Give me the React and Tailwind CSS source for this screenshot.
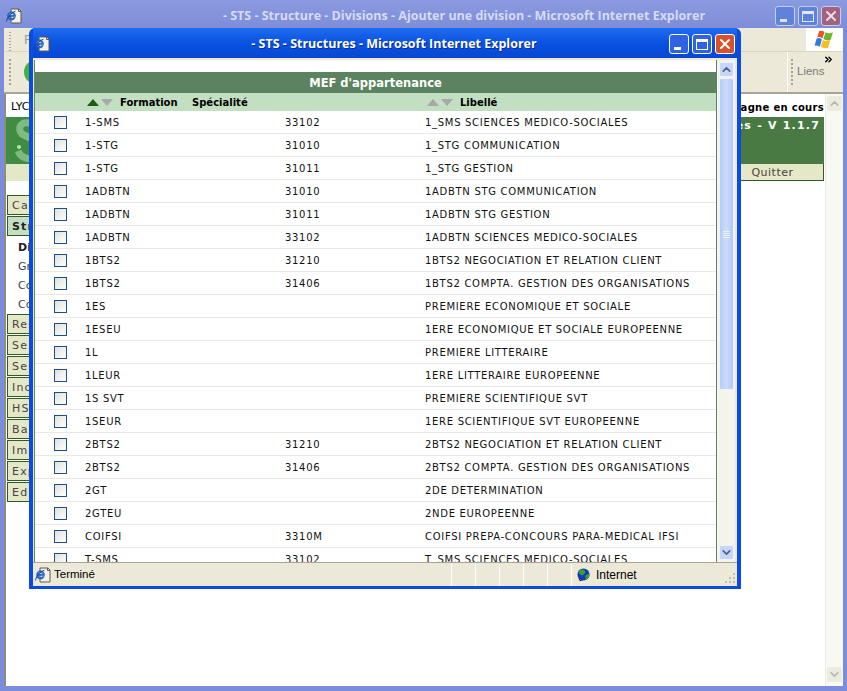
import { ChevronUp, ChevronDown, ChevronsRight, X } from 'lucide-react'

const lignes = [
  ['1-SMS', '33102', '1_SMS SCIENCES MEDICO-SOCIALES'],
  ['1-STG', '31010', '1_STG COMMUNICATION'],
  ['1-STG', '31011', '1_STG GESTION'],
  ['1ADBTN', '31010', '1ADBTN STG COMMUNICATION'],
  ['1ADBTN', '31011', '1ADBTN STG GESTION'],
  ['1ADBTN', '33102', '1ADBTN SCIENCES MEDICO-SOCIALES'],
  ['1BTS2', '31210', '1BTS2 NEGOCIATION ET RELATION CLIENT'],
  ['1BTS2', '31406', '1BTS2 COMPTA. GESTION DES ORGANISATIONS'],
  ['1ES', '', 'PREMIERE ECONOMIQUE ET SOCIALE'],
  ['1ESEU', '', '1ERE ECONOMIQUE ET SOCIALE EUROPEENNE'],
  ['1L', '', 'PREMIERE LITTERAIRE'],
  ['1LEUR', '', '1ERE LITTERAIRE EUROPEENNE'],
  ['1S SVT', '', 'PREMIERE SCIENTIFIQUE SVT'],
  ['1SEUR', '', '1ERE SCIENTIFIQUE SVT EUROPEENNE'],
  ['2BTS2', '31210', '2BTS2 NEGOCIATION ET RELATION CLIENT'],
  ['2BTS2', '31406', '2BTS2 COMPTA. GESTION DES ORGANISATIONS'],
  ['2GT', '', '2DE DETERMINATION'],
  ['2GTEU', '', '2NDE EUROPEENNE'],
  ['COIFSI', '3310M', 'COIFSI PREPA-CONCOURS PARA-MEDICAL IFSI'],
  ['T-SMS', '33102', 'T_SMS SCIENCES MEDICO-SOCIALES'],
]

const menuBas = ['Res', 'Ser', 'Ser', 'Inc', 'HSA', 'Bas', 'Imp', 'Exp', 'Edit']

function IconeIE({ className }) {
  return (
    <svg viewBox="0 0 16 16" className={className}>
      <path d="M5 1h8l2 2v12H5z" fill="#f4f2e8" stroke="#5c5c50" />
      <path d="M12.5 1v2.5H15" fill="#d8d6c8" stroke="#5c5c50" />
      <path d="M1.6 8.4a4 4 0 1 1 7.9 0H3.6a2 2 0 0 0 3.7 1.2h2a4 4 0 0 1-7.7-1.2z" fill="#2a70d8" stroke="#14459c" strokeWidth="0.5" />
      <path d="M3.7 6.8h3.8a2 2 0 0 0-3.8 0z" fill="#f4f2e8" />
      <path d="M0.7 13.4C0 11 5 4.500 9.400 3.300" fill="none" stroke="#123f96" strokeWidth="1" />
    </svg>
  )
}

function BoutonsFenetre({ pale = false }) {
  const bleu = pale
    ? 'bg-[#5f82dc] border-[#c4cff0] text-[#dfe6fa]'
    : 'bg-[#2f63e4] border-white text-white'
  const rouge = pale
    ? 'bg-[#a4627e] border-[#c4cff0] text-[#f0dfe4]'
    : 'bg-[#d8512c] border-white text-white'
  return (
    <div className="flex gap-[3px]">
      <div className={`w-[20px] h-[20px] rounded-[3px] border flex items-end pl-[4px] pb-[3px] ${bleu}`}>
        <div className="w-[7px] h-[3px] bg-current" />
      </div>
      <div className={`w-[20px] h-[20px] rounded-[3px] border flex items-center justify-center ${bleu}`}>
        <div className="w-[12px] h-[11px] border border-current border-t-[3px]" />
      </div>
      <div className={`w-[20px] h-[20px] rounded-[3px] border flex items-center justify-center ${rouge}`}>
        <X size={16} strokeWidth={3} />
      </div>
    </div>
  )
}

function Poignee({ className = '' }) {
  return (
    <div className={`flex flex-col gap-[2px] ${className}`}>
      {[0, 1, 2, 3, 4, 5, 6].map((i) => (
        <div key={i} className="w-[2px] h-[2px] bg-[#a8a596]" />
      ))}
    </div>
  )
}

function Fleches({ actif = false }) {
  return (
    <div className="flex gap-[2px]">
      <div className={`w-0 h-0 border-x-[6.5px] border-x-transparent border-b-[7px] ${actif ? 'border-b-[#1f5a14]' : 'border-b-[#a8a8a8]'}`} />
      <div className="w-0 h-0 border-x-[6.5px] border-x-transparent border-t-[7px] border-t-[#a8a8a8]" />
    </div>
  )
}

function BoutonMenu({ label, actif = false }) {
  return (
    <div className={`h-[20px] w-[40px] mb-px border border-[#2f5a22] pl-[4px] text-[11px] leading-[19px] tracking-[1.2px] overflow-hidden whitespace-nowrap ${actif ? 'bg-[#c3dfc1] font-bold text-[#222]' : 'bg-[#e4e8c6] text-[#444]'}`}>
      {label}
    </div>
  )
}

function BarreDefilement() {
  return (
    <div className="w-[18px] shrink-0 bg-[#f4f3ec] flex flex-col items-center pt-[2px] pb-[2px]">
      <div className="w-[15px] h-[15px] rounded-[2px] bg-[#c5d6fa] border border-[#eef3fe] flex items-center justify-center text-[#4d6185]">
        <ChevronUp size={13} strokeWidth={3} />
      </div>
      <div className="w-[15px] h-[312px] mt-px rounded-[2px] bg-gradient-to-r from-[#b6ccf8] via-[#cbdafc] to-[#b2c8f4] border border-[#eef3fe] flex flex-col items-center justify-center gap-px">
        <div className="w-[7px] h-px bg-[#eef3fe]" />
        <div className="w-[7px] h-px bg-[#eef3fe]" />
        <div className="w-[7px] h-px bg-[#eef3fe]" />
        <div className="w-[7px] h-px bg-[#eef3fe]" />
      </div>
      <div className="flex-1" />
      <div className="w-[15px] h-[15px] rounded-[2px] bg-[#c5d6fa] border border-[#eef3fe] flex items-center justify-center text-[#4d6185]">
        <ChevronDown size={13} strokeWidth={3} />
      </div>
    </div>
  )
}

function Popup() {
  return (
    <div className="absolute left-[29px] top-[28px] w-[712px] h-[561px] flex flex-col rounded-t-[6px] bg-[#0a4be0] px-[4px] pb-[3px]">
      {/* Barre de titre */}
      <div className="h-[30px] shrink-0 flex items-center pt-[2px] pr-[2px] bg-gradient-to-b from-[#1f6cf0] via-[#0a52e0] to-[#0847d4]">
        <IconeIE className="w-[16px] h-[16px] ml-[1px]" />
        <div className="flex-1 text-center text-white font-bold text-[12.5px] pl-[69px] [font-family:'Open_Sans',sans-serif] [text-shadow:1px_1px_#0a2a90]">
          - STS - Structures - Microsoft Internet Explorer
        </div>
        <BoutonsFenetre />
      </div>

      <div className="flex-1 min-h-0 flex bg-[#ece9d8] pt-[2px] pl-[1px] pr-[2px]">
        <div className="flex-1 min-w-0 flex flex-col bg-white border-l border-l-[#6f8a62] overflow-hidden border-r border-r-[#5c8360] [font-family:'DejaVu_Sans',sans-serif]">
          <div className="h-[12px] shrink-0 bg-white" />
          <div className="h-[21px] shrink-0 bg-[#5c8360] text-white text-center font-bold text-[11.5px] leading-[23px]">
            MEF d'appartenance
          </div>
          <div className="h-[18px] shrink-0 bg-[#c3dfc1] flex items-center text-[10px] font-bold text-black">
            <div className="w-[52px]" />
            <Fleches actif />
            <span className="ml-[7px] w-[72px]">Formation</span>
            <span className="w-[235px]">Spécialité</span>
            <Fleches />
            <span className="ml-[7px]">Libellé</span>
          </div>
          <div className="flex-1 min-h-0 overflow-hidden">
            {lignes.map(([formation, specialite, libelle], i) => (
              <div key={i} className="h-[23px] grid grid-cols-[50px_200px_140px_1fr] items-center border-b border-b-[#e8e8e8] text-[10px] tracking-[0.7px] text-[#111]">
                <div className="pl-[19px]">
                  <div className="w-[13px] h-[13px] border border-[#1c5180] bg-gradient-to-br from-[#e0e0da] to-white" />
                </div>
                <span>{formation}</span>
                <span>{specialite}</span>
                <span className="whitespace-nowrap">{libelle}</span>
              </div>
            ))}
          </div>
        </div>
        <BarreDefilement />
      </div>

      {/* Barre d'état */}
      <div className="h-[24px] shrink-0 bg-[#ece9d8] border-t border-t-[#a8a596] flex items-center text-[11.5px] text-black [font-family:'Liberation_Sans',sans-serif]">
        <IconeIE className="w-[16px] h-[16px] ml-[2px]" />
        <span className="ml-[3px] w-[397px]">Terminé</span>
        <div className="h-[22px] w-[24px] border-l border-l-white" />
        <div className="h-[22px] w-[24px] border-l border-l-white" />
        <div className="h-[22px] w-[24px] border-l border-l-white" />
        <div className="h-[22px] w-[24px] border-l border-l-white" />
        <div className="h-[22px] w-[24px] border-l border-l-white" />
        <div className="h-[22px] flex-1 border-l border-l-white flex items-center pl-[5px]">
          <svg viewBox="0 0 14 14" className="w-[13px] h-[13px]">
            <circle cx="7" cy="7" r="6.5" fill="#1638b8" />
            <path d="M3 1.500l5 .5 1 3-3 3-4-2zM9 8l4-2 0 4-4 3z" fill="#2fa82a" />
            <path d="M1 10l3 3 3 1-4 0z" fill="#101838" />
          </svg>
          <span className="ml-[6px] text-[12px]">Internet</span>
          <div className="flex-1" />
          <svg viewBox="0 0 11 11" className="w-[11px] h-[11px] mr-[1px] mt-[8px]">
            <path d="M8 0h2v2H8zM4 4h2v2H4zM8 4h2v2H8zM0 8h2v2H0zM4 8h2v2H4zM8 8h2v2H8z" fill="#c4c1ae" />
          </svg>
        </div>
      </div>
    </div>
  )
}

export default function App() {
  return (
    <div className="relative w-[847px] h-[691px] overflow-hidden flex flex-col bg-[#7c8cdc] [font-family:'DejaVu_Sans',sans-serif]">
      {/* Fenêtre derrière */}
      <div className="h-[28px] shrink-0 flex items-center pt-[4px] pr-[6px] bg-gradient-to-b from-[#8b9be0] to-[#7d8dd8]">
        <IconeIE className="w-[16px] h-[16px] ml-[6px]" />
        <div className="flex-1 text-center text-[#d6dbf3] font-bold text-[12.5px] pl-[131px] [font-family:'Open_Sans',sans-serif]">
          - STS - Structure - Divisions - Ajouter une division - Microsoft Internet Explorer
        </div>
        <BoutonsFenetre pale />
      </div>

      <div className="flex-1 min-h-0 mx-[4px] mb-[5px] flex flex-col bg-white">
        <div className="h-[24px] shrink-0 flex bg-[#ece9d8] border-b border-b-[#d8d4c0] pl-[5px] text-[12px] text-[#999]">
          <Poignee className="pt-[4px]" />
          <span className="leading-[24px] ml-[13px]">F</span>
          <div className="flex-1" />
          <div className="w-[37px] bg-white flex items-center justify-center">
            <svg viewBox="0 0 20 20" className="w-[21px] h-[21px]">
              <path d="M5 2q3-1 5 1l-2 6q-3-2-5-1z" fill="#e8552a" />
              <path d="M11 3q3 2 7 0l-2 7q-3 2-7-.5z" fill="#6cb52c" />
              <path d="M2.500 9q3-1 5 1l-2 7q-3-2-5-1z" fill="#2f7ce0" />
              <path d="M8.500 10.500q3 2 7 0l-2 7q-3 2-7-.5z" fill="#f4c020" />
            </svg>
          </div>
        </div>
        <div className="h-[42px] shrink-0 flex items-center bg-[#ece9d8] border-b-2 border-b-[#a8a596] pl-[5px] pr-[4px]">
          <Poignee />
          <div className="ml-[13px] w-[14px] h-[24px] rounded-l-full bg-[#3cb43c]" />
          <div className="flex-1" />
          <div className="w-[52px] h-full border-l border-l-white flex items-center pl-[3px] relative">
            <Poignee />
            <span className="ml-[4px] text-[11.500px] text-[#7a7a72] [font-family:'Liberation_Sans',sans-serif]">Liens</span>
            <ChevronsRight size={11} strokeWidth={3} className="absolute right-[5px] top-[2px] text-black" />
          </div>
        </div>

        <div className="flex-1 min-h-0 flex border-l-2 border-l-[#8e8e80]">
          <div className="flex-1 min-w-0 flex flex-col mr-px">
            <div className="h-[23px] shrink-0 flex items-center justify-between pt-[3px] pl-[5px] text-[11px] text-black">
              <span>LYCÉE</span>
              <span className="font-bold text-[10px] tracking-[0.3px]">Campagne en cours</span>
            </div>
            <div className="h-[47px] shrink-0 bg-[#4a7a44] flex justify-between pr-[4px] text-white font-bold text-[11px] tracking-[1.200px] leading-[14px]">
              <svg viewBox="0 0 26 47" className="w-[26px] h-[47px] bg-[#3f8c42]">
                <path d="M24 6C14 4 11 12 16 17l8 4" fill="none" stroke="#7fba80" strokeWidth="7" />
                <path d="M12 34c2 5 7 8 14 8" fill="none" stroke="#7fba80" strokeWidth="7" />
                <circle cx="13" cy="30" r="2" fill="#a8f0a0" />
              </svg>
              <span className="whitespace-nowrap pt-[2px]">Structures - V 1.1.7</span>
            </div>
            <div className="h-[17px] shrink-0 bg-[#e4e8c6] flex justify-end">
              <div className="w-[102px] border-r border-b border-[#2f5a22] text-center text-[11px] tracking-[0.5px] leading-[17px] text-[#444]">
                Quitter
              </div>
            </div>
            <div className="pl-[1px] pt-[14px]">
              <BoutonMenu label="Car" />
              <BoutonMenu label="Structures" actif />
              <div className="h-[77px] pl-[11px] text-[11px] leading-[19px] text-[#444]">
                <div className="font-bold text-[#222] pt-[1px]">Di</div>
                <div>Gr</div>
                <div>Co</div>
                <div>Co</div>
              </div>
              {menuBas.map((label, i) => (
                <BoutonMenu key={i} label={label} />
              ))}
            </div>
          </div>
          {/* Défilement de la page derrière */}
          <div className="w-[18px] shrink-0 bg-[#f9f9f3] border-l border-l-[#ecebe0] flex flex-col items-center py-[1px]">
            <div className="w-[15px] h-[15px] mt-[1px] bg-[#ecebe0] rounded-[2px] flex items-center justify-center text-[#b8b8a8]">
              <ChevronUp size={13} strokeWidth={3} />
            </div>
            <div className="flex-1" />
            <div className="w-[15px] h-[15px] mb-[3px] bg-[#ecebe0] rounded-[2px] flex items-center justify-center text-[#b8b8a8]">
              <ChevronDown size={13} strokeWidth={3} />
            </div>
          </div>
        </div>
      </div>

      <Popup />
    </div>
  )
}
